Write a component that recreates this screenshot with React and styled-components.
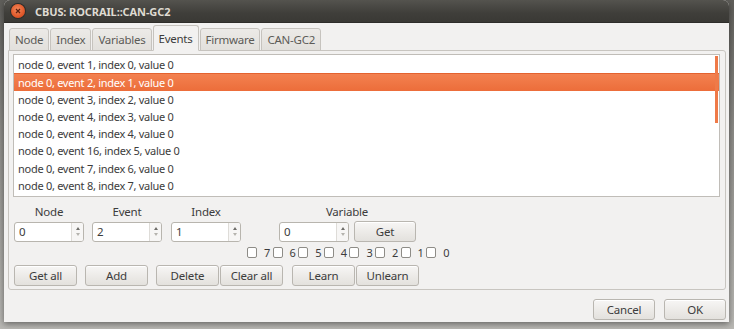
import React from "react";
import styled, { createGlobalStyle } from "styled-components";

const Global = createGlobalStyle`
  html, body { margin: 0; padding: 0; }
  body {
    width: 734px; height: 329px; overflow: hidden;
    background: linear-gradient(180deg, #5f5e5a 0%, #8d8c88 40%, #b9b8b4 100%);
    font-family: "Noto Sans", "DejaVu Sans", sans-serif;
  }
`;

const Screen = styled.div`
  display: flex;
  padding: 0 5px 7px 4px;
  height: 329px;
  box-sizing: border-box;
`;

const Window = styled.div`
  flex: 1;
  display: flex;
  flex-direction: column;
  border-radius: 6px 6px 0 0;
  overflow: hidden;
  background: #f2f1f0;
  box-shadow: 0 2px 6px rgba(0,0,0,0.45);
`;

const TitleBar = styled.div`
  height: 22px;
  flex: none;
  display: flex;
  align-items: center;
  gap: 10px;
  padding-left: 7px;
  background: linear-gradient(180deg, #54534e 0%, #3f3e3a 60%, #3a3935 100%);
  border-bottom: 1px solid #2e2d2a;
`;

const Close = styled.div`
  width: 14px; height: 14px;
  border-radius: 50%;
  background: radial-gradient(circle at 45% 40%, #f58a5c 0%, #e0582a 60%, #c2441c 100%);
  box-shadow: 0 0 0 1px #2d2c29;
  display: flex; align-items: center; justify-content: center;
`;

const Title = styled.div`
  color: #dfdbd2;
  font-weight: bold;
  font-size: 11px;
  letter-spacing: -0.1px;
`;

const Body = styled.div`
  flex: 1;
  display: flex;
  flex-direction: column;
  padding: 2px 3px 0 4px;
`;

const Tabs = styled.div`
  display: flex;
  align-items: flex-end;
  height: 26px;
  padding-left: 1px;
  margin-bottom: -1px;
  position: relative;
  z-index: 1;
`;

const Tab = styled.div`
  height: ${p => (p.$active ? "26px" : "23px")};
  box-sizing: border-box;
  padding: 0 5px;
  margin-right: 1px;
  display: flex;
  align-items: center;
  font-size: 11.5px;
  letter-spacing: -0.25px;
  color: ${p => (p.$active ? "#3c3c3c" : "#5c5b57")};
  background: ${p => (p.$active ? "#f2f1f0" : "linear-gradient(180deg,#eceae7,#e2e0dc)")};
  border: 1px solid #c6c3be;
  border-bottom: ${p => (p.$active ? "1px solid #f2f1f0" : "1px solid #c6c3be")};
  border-radius: 3px 3px 0 0;
`;

const Panel = styled.div`
  height: 240px;
  box-sizing: border-box;
  border: 1px solid #c8c5c0;
  border-radius: 0 3px 3px 3px;
  padding: 3px 5px 0 4px;
  display: flex;
  flex-direction: column;
`;

const List = styled.div`
  height: 143px;
  box-sizing: border-box;
  border: 1px solid #c0bdb8;
  background: #fff;
  position: relative;
  padding-top: 1px;
`;

const Row = styled.div`
  height: 17.25px;
  display: flex;
  align-items: center;
  padding-left: 4px;
  font-size: 11px;
  letter-spacing: -0.28px;
  color: ${p => (p.$sel ? "#fff" : "#3c3c3c")};
  background: ${p => (p.$sel ? "linear-gradient(180deg,#f38150,#ec6d3a)" : "transparent")};
  border-top: ${p => (p.$sel ? "1px solid #e4622f" : "none")};
  box-sizing: border-box;
`;

const ScrollThumb = styled.div`
  position: absolute;
  right: 1px; top: 1px;
  width: 3px; height: 67px;
  background: #ef7a48;
`;

const Controls = styled.div`
  display: flex;
  flex-direction: column;
  padding-left: 1px;
`;

const LabelRow = styled.div`
  display: flex;
  height: 24px;
  align-items: flex-end;
  padding-bottom: 2px;
  box-sizing: border-box;
`;

const Label = styled.div`
  width: ${p => p.$w}px;
  margin-left: ${p => p.$ml || 0}px;
  text-align: center;
  font-size: 11.5px;
  letter-spacing: -0.2px;
  color: #3c3c3c;
`;

const InputRow = styled.div`
  display: flex;
  align-items: center;
  height: 21px;
`;

const Spin = styled.div`
  display: flex;
  width: 70px;
  height: 20px;
  box-sizing: border-box;
  margin-left: ${p => p.$ml || 0}px;
  border: 1px solid #b8b5ae;
  border-radius: 3px;
  background: #fff;
  overflow: hidden;
`;

const SpinText = styled.div`
  flex: 1;
  font-size: 11.5px;
  color: #3c3c3c;
  padding-left: 4px;
  display: flex;
  align-items: center;
`;

const SpinArrows = styled.div`
  width: 11px;
  border-left: 1px solid #dedcd8;
  background: #f7f6f5;
  display: flex;
  flex-direction: column;
  align-items: center;
  justify-content: center;
  gap: 3px;
`;

const Arrow = styled.div`
  width: 0; height: 0;
  border-left: 2px solid transparent;
  border-right: 2px solid transparent;
  ${p => (p.$up ? "border-bottom: 3px solid #6e6d69;" : "border-top: 3px solid #b5b3ae;")}
`;

const Button = styled.div`
  width: ${p => p.$w || 63}px;
  height: ${p => p.$h || 21}px;
  box-sizing: border-box;
  margin-left: ${p => p.$ml || 0}px;
  border: 1px solid #b9b6b0;
  border-radius: 3px;
  background: linear-gradient(180deg, #f7f6f5 0%, #ebe9e6 60%, #e3e1dd 100%);
  box-shadow: inset 0 1px 0 #fff;
  display: flex;
  align-items: center;
  justify-content: center;
  font-size: 11.5px;
  letter-spacing: -0.2px;
  color: #3c3c3c;
`;

const Checks = styled.div`
  display: grid;
  grid-template-columns: repeat(8, 25.6px);
  margin-left: 233px;
  height: 14px;
  align-items: center;
  margin-top: 3px;
`;

const Check = styled.div`
  display: flex;
  align-items: center;
  font-size: 11px;
  color: #3c3c3c;
`;

const Box = styled.div`
  width: 10px; height: 11px;
  box-sizing: border-box;
  border: 1px solid #8e8c87;
  border-radius: 2px;
  background: #fff;
  margin-right: 7px;
`;

const ButtonRow = styled.div`
  display: flex;
  align-items: center;
  margin-top: 6px;
`;

const Footer = styled.div`
  flex: 1;
  display: flex;
  justify-content: flex-end;
  align-items: flex-start;
  padding: 9px 0 0 0;
  gap: 9px;
`;

const rows = [
  [1, 0], [2, 1], [3, 2], [4, 3], [4, 4], [16, 5], [7, 6], [8, 7],
];

const SpinBox = ({ value, ml }) => (
  <Spin $ml={ml}>
    <SpinText>{value}</SpinText>
    <SpinArrows>
      <Arrow $up />
      <Arrow />
    </SpinArrows>
  </Spin>
);

export default function App() {
  return (
    <>
      <Global />
      <Screen>
        <Window>
          <TitleBar>
            <Close>
              <svg width="6" height="6" viewBox="0 0 6 6">
                <path d="M1 1L5 5M5 1L1 5" stroke="#5a2010" strokeWidth="1.2" />
              </svg>
            </Close>
            <Title>CBUS: ROCRAIL::CAN-GC2</Title>
          </TitleBar>
          <Body>
            <Tabs>
              <Tab>Node</Tab>
              <Tab>Index</Tab>
              <Tab>Variables</Tab>
              <Tab $active>Events</Tab>
              <Tab>Firmware</Tab>
              <Tab>CAN-GC2</Tab>
            </Tabs>
            <Panel>
              <List>
                {rows.map(([e, i]) => (
                  <Row key={i} $sel={i === 1}>
                    node 0, event {e}, index {i}, value 0
                  </Row>
                ))}
                <ScrollThumb />
              </List>
              <Controls>
                <LabelRow>
                  <Label $w={70}>Node</Label>
                  <Label $w={70} $ml={8}>Event</Label>
                  <Label $w={70} $ml={9}>Index</Label>
                  <Label $w={136} $ml={38}>Variable</Label>
                </LabelRow>
                <InputRow>
                  <SpinBox value="0" />
                  <SpinBox value="2" ml={8} />
                  <SpinBox value="1" ml={9} />
                  <SpinBox value="0" ml={38} />
                  <Button $ml={5} $w={62} $h={21}>Get</Button>
                </InputRow>
                <Checks>
                  {[7, 6, 5, 4, 3, 2, 1, 0].map(n => (
                    <Check key={n}>
                      <Box />
                      {n}
                    </Check>
                  ))}
                </Checks>
                <ButtonRow>
                  <Button>Get all</Button>
                  <Button $ml={8}>Add</Button>
                  <Button $ml={8}>Delete</Button>
                  <Button $ml={1}>Clear all</Button>
                  <Button $ml={9}>Learn</Button>
                  <Button $ml={1}>Unlearn</Button>
                </ButtonRow>
              </Controls>
            </Panel>
            <Footer>
              <Button $w={62} $h={21}>Cancel</Button>
              <Button $w={62} $h={21}>OK</Button>
            </Footer>
          </Body>
        </Window>
      </Screen>
    </>
  );
}
